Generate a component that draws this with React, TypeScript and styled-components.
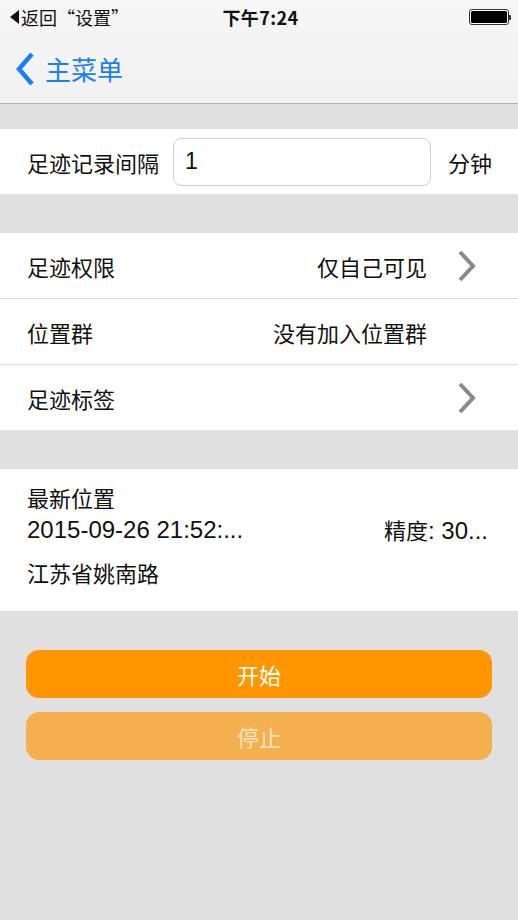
import React from 'react'
import styled, { createGlobalStyle } from 'styled-components'

const GlobalStyle = createGlobalStyle`
  html, body {
    margin: 0;
    padding: 0;
    background: #e0e0e0;
  }
  body {
    font-family: "Noto Sans CJK SC", "Noto Sans", "Liberation Sans", sans-serif;
    color: #111;
  }
`

const Screen = styled.div`
  width: 518px;
  min-height: 920px;
  background: #e0e0e0;
  display: flex;
  flex-direction: column;
`

const Header = styled.header`
  background: linear-gradient(#f6f6f6, #f1f1f1);
  border-bottom: 1px solid #b4b4b4;
  height: 103px;
  display: flex;
  flex-direction: column;
`

const StatusBar = styled.div`
  height: 34px;
  display: grid;
  grid-template-columns: 1fr auto 1fr;
  align-items: center;
  padding: 0 7px 0 10px;
  font-size: 18px;
`

const BackLink = styled.div`
  display: flex;
  align-items: center;
  gap: 2px;
  color: #111;
`

const Clock = styled.div`
  font-weight: 700;
  font-size: 18px;
  letter-spacing: 0.4px;
`

const Battery = styled.div`
  justify-self: end;
  display: flex;
  align-items: center;
`

const BatteryBody = styled.div`
  width: 36px;
  height: 12px;
  border: 1.5px solid #333;
  border-radius: 3px;
  padding: 1px;
  background: #fff;
  div {
    width: 100%;
    height: 100%;
    background: #000;
    border-radius: 1.5px;
  }
`

const BatteryNub = styled.div`
  width: 2px;
  height: 5px;
  background: #333;
  border-radius: 0 1px 1px 0;
`

const NavBar = styled.div`
  flex: 1;
  display: flex;
  align-items: center;
  padding-left: 14px;
  gap: 9px;
  color: #1a7efb;
  font-size: 26px;
`

const Section = styled.section<{ $top: number }>`
  margin-top: ${p => p.$top}px;
  background: #fff;
`

const Row = styled.div`
  height: 65px;
  display: flex;
  align-items: center;
  padding: 0 26px 0 27px;
  font-size: 22px;
  & + & {
    border-top: 1px solid #dcdcdc;
  }
`

const Label = styled.div`
  flex: 1;
`

const Value = styled.div`
  color: #111;
`

const ChevronSlot = styled.div`
  width: 35px;
  margin-left: 30px;
  display: flex;
  align-items: center;
`

const IntervalRow = styled(Row)`
  gap: 14px;
`

const Input = styled.input`
  width: 258px;
  height: 48px;
  box-sizing: border-box;
  border: 1px solid #cfcfcf;
  border-radius: 8px;
  padding: 0 11px;
  font-size: 23px;
  font-family: "Liberation Sans", sans-serif;
  color: #111;
  outline: none;
`

const Unit = styled.div`
  margin-left: auto;
`

const LocationBlock = styled.div`
  padding: 13px 30px 24px 27px;
  font-size: 22px;
  line-height: 30px;
  display: flex;
  flex-direction: column;
`

const MetaLine = styled.div`
  margin-top: 3px;
  height: 30px;
  display: flex;
  justify-content: space-between;
  align-items: center;
`

const Num = styled.span`
  font-family: "Liberation Sans", sans-serif;
  font-size: 24px;
  line-height: 30px;
`

const Address = styled.div`
  margin-top: 12px;
`

const Actions = styled.div`
  margin: 39px 26px 0;
  display: flex;
  flex-direction: column;
  gap: 14px;
`

const ActionButton = styled.button<{ $muted?: boolean }>`
  height: 48px;
  border: none;
  border-radius: 13px;
  background: ${p => (p.$muted ? '#f4b04f' : '#ff9500')};
  color: ${p => (p.$muted ? '#fbe3c2' : '#fff')};
  font-family: inherit;
  font-size: 22px;
  cursor: pointer;
`

const Chevron = () => (
  <svg width="20" height="34" viewBox="0 0 20 34">
    <path d="M3 3 L16 17 L3 31" fill="none" stroke="#8a8a8a" strokeWidth="4" />
  </svg>
)

const BackChevron = () => (
  <svg width="22" height="36" viewBox="0 0 22 36">
    <path d="M18 3 L5 18 L18 33" fill="none" stroke="#1a7efb" strokeWidth="4.5" />
  </svg>
)

const settingRows = [
  { label: '足迹权限', value: '仅自己可见', arrow: true },
  { label: '位置群', value: '没有加入位置群', arrow: false },
  { label: '足迹标签', value: '', arrow: true },
]

export default function App() {
  return (
    <Screen>
      <GlobalStyle />
      <Header>
        <StatusBar>
          <BackLink>
            <svg width="9" height="14" viewBox="0 0 9 14">
              <path d="M9 0 L0 7 L9 14 Z" fill="#111" />
            </svg>
            返回“设置”
          </BackLink>
          <Clock>下午7:24</Clock>
          <Battery>
            <BatteryBody>
              <div />
            </BatteryBody>
            <BatteryNub />
          </Battery>
        </StatusBar>
        <NavBar>
          <BackChevron />
          主菜单
        </NavBar>
      </Header>

      <Section $top={25}>
        <IntervalRow>
          <span>足迹记录间隔</span>
          <Input defaultValue="1" />
          <Unit>分钟</Unit>
        </IntervalRow>
      </Section>

      <Section $top={39}>
        {settingRows.map(r => (
          <Row key={r.label}>
            <Label>{r.label}</Label>
            <Value>{r.value}</Value>
            <ChevronSlot>{r.arrow && <Chevron />}</ChevronSlot>
          </Row>
        ))}
      </Section>

      <Section $top={39}>
        <LocationBlock>
          <div>最新位置</div>
          <MetaLine>
            <Num>2015-09-26 21:52:...</Num>
            <span>
              精度<Num>: 30...</Num>
            </span>
          </MetaLine>
          <Address>江苏省姚南路</Address>
        </LocationBlock>
      </Section>

      <Actions>
        <ActionButton>开始</ActionButton>
        <ActionButton $muted>停止</ActionButton>
      </Actions>
    </Screen>
  )
}
